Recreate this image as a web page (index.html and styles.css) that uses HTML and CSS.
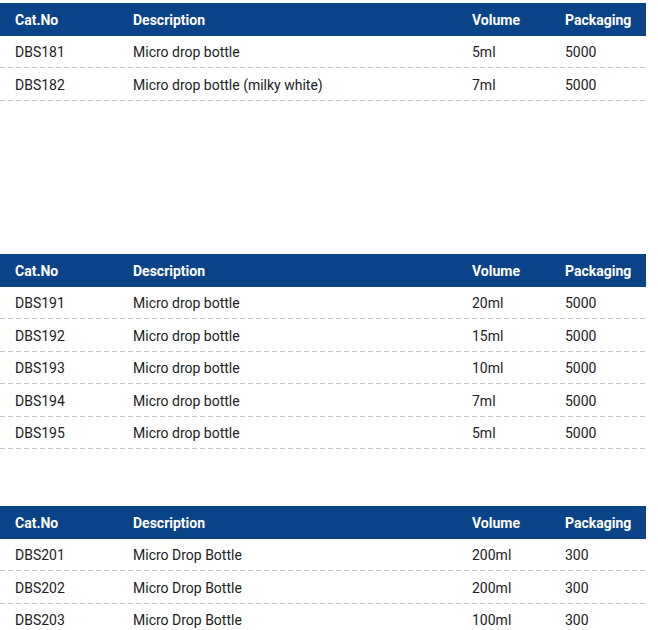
FILE: index.html
```html
<!DOCTYPE html>
<html>
<head>
<meta charset="utf-8">
<link rel="stylesheet" href="styles.css">
</head>
<body>
<div class="page">
  <div class="table t1">
    <div class="row head"><span>Cat.No</span><span>Description</span><span>Volume</span><span>Packaging</span></div>
    <div class="row"><span>DBS181</span><span>Micro drop bottle</span><span>5ml</span><span>5000</span></div>
    <div class="row"><span>DBS182</span><span>Micro drop bottle (milky white)</span><span>7ml</span><span>5000</span></div>
  </div>
  <div class="table t2">
    <div class="row head"><span>Cat.No</span><span>Description</span><span>Volume</span><span>Packaging</span></div>
    <div class="row"><span>DBS191</span><span>Micro drop bottle</span><span>20ml</span><span>5000</span></div>
    <div class="row"><span>DBS192</span><span>Micro drop bottle</span><span>15ml</span><span>5000</span></div>
    <div class="row"><span>DBS193</span><span>Micro drop bottle</span><span>10ml</span><span>5000</span></div>
    <div class="row"><span>DBS194</span><span>Micro drop bottle</span><span>7ml</span><span>5000</span></div>
    <div class="row"><span>DBS195</span><span>Micro drop bottle</span><span>5ml</span><span>5000</span></div>
  </div>
  <div class="table t3">
    <div class="row head"><span>Cat.No</span><span>Description</span><span>Volume</span><span>Packaging</span></div>
    <div class="row"><span>DBS201</span><span>Micro Drop Bottle</span><span>200ml</span><span>300</span></div>
    <div class="row"><span>DBS202</span><span>Micro Drop Bottle</span><span>200ml</span><span>300</span></div>
    <div class="row"><span>DBS203</span><span>Micro Drop Bottle</span><span>100ml</span><span>300</span></div>
  </div>
</div>
</body>
</html>
```

FILE: styles.css
```css
html, body {
  margin: 0;
  padding: 0;
  background: #ffffff;
}
body {
  font-family: Roboto, "Liberation Sans", sans-serif;
  font-size: 14px;
  color: #222222;
}
.page {
  width: 646px;
  padding-top: 3px;
}
.table {
  display: flex;
  flex-direction: column;
}
.t2 { margin-top: 153.5px; }
.t3 { margin-top: 57px; }
.row {
  display: grid;
  grid-template-columns: 118px 339px 93px 1fr;
  align-items: center;
  padding-left: 15px;
  padding-top: 1px;
  height: 31.5px;
  background-image: repeating-linear-gradient(to right, #c4c4c4 0 5px, transparent 5px 8px);
  background-size: 100% 1px;
  background-position: left bottom;
  background-repeat: no-repeat;
}
.row.head {
  background: #0a4388;
  color: #ffffff;
  font-weight: 700;
}
.t3 .row:last-child {
  background-image: none;
}
```
